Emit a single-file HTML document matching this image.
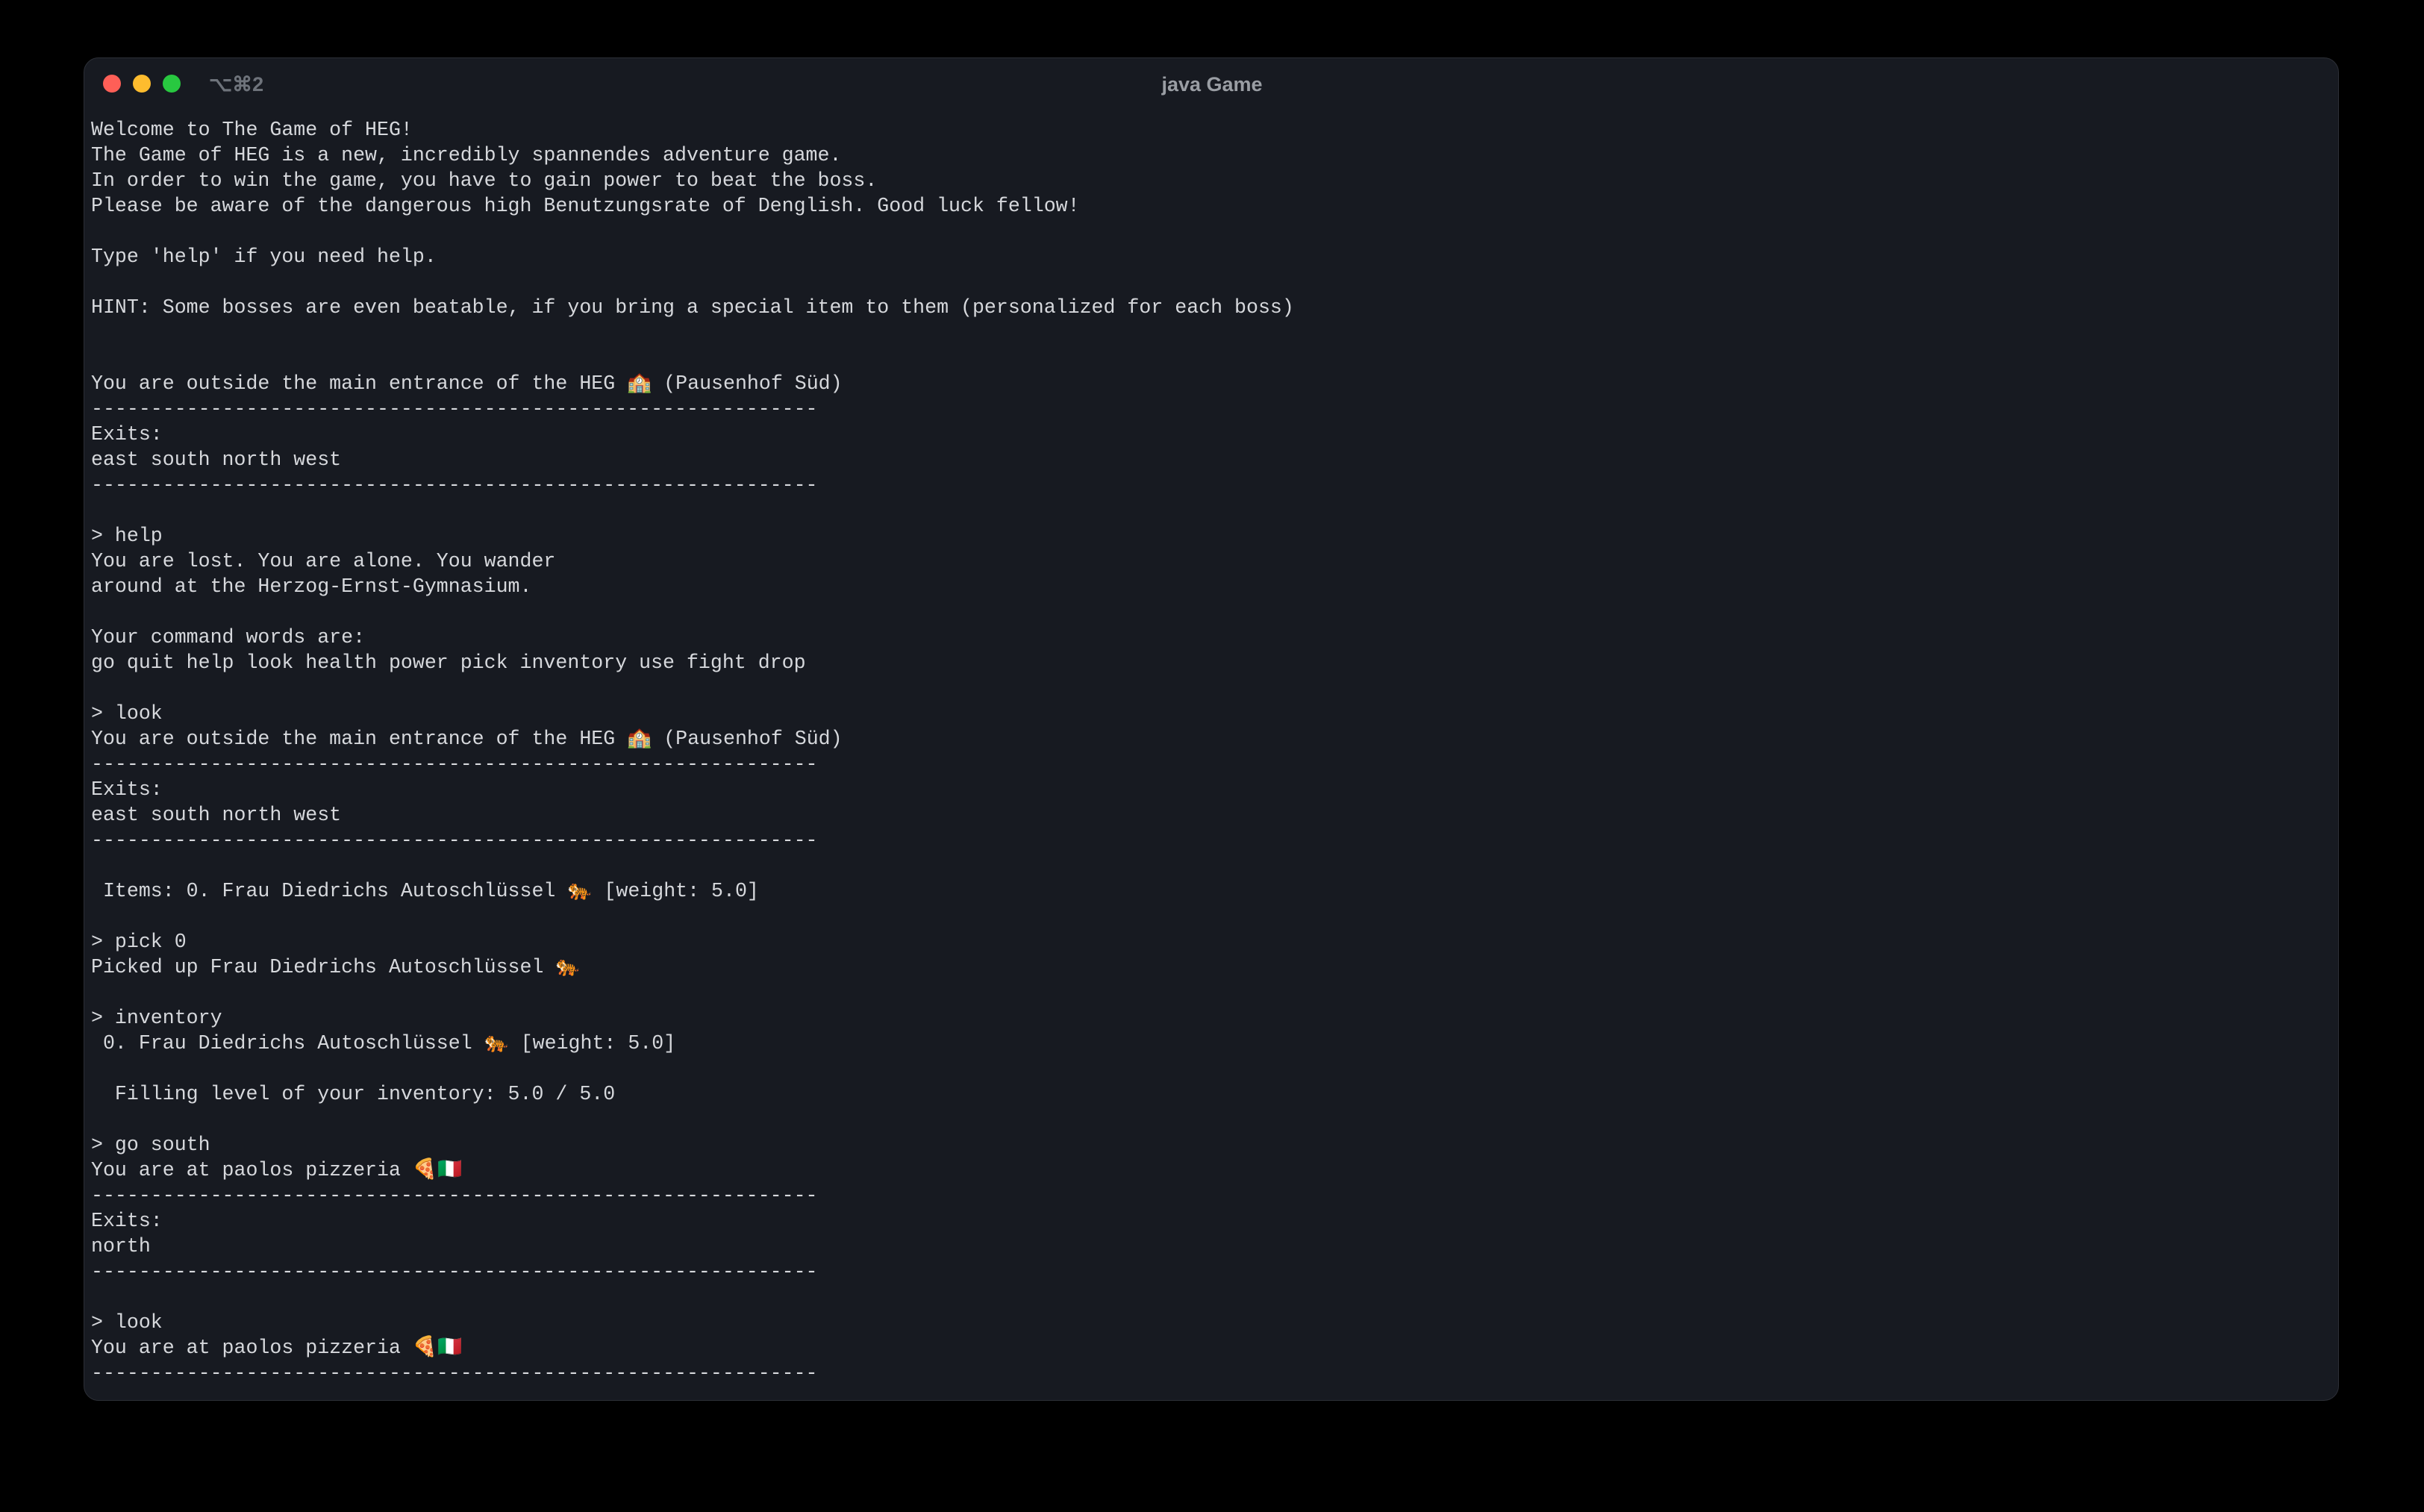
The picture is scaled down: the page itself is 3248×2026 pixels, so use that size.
<!DOCTYPE html>
<html><head><meta charset="utf-8"><style>
html,body{margin:0;padding:0;background:#000;width:3248px;height:2026px;overflow:hidden}
.win{position:absolute;left:112px;top:77px;width:3022px;height:1800px;background:#171a21;border-radius:20px;border:1px solid #2c2f36;box-sizing:border-box}
.dot{position:absolute;top:100px;width:24px;height:24px;border-radius:50%}
.t2{position:absolute;left:280px;top:98px;font:bold 27px "Liberation Sans",sans-serif;color:#6e737b}
.title{position:absolute;left:0;width:3248px;top:98px;text-align:center;font:bold 27px "Liberation Sans",sans-serif;color:#9a9ea4}
pre{position:absolute;left:122px;top:157px;margin:0;font:26.6px/34px "Liberation Mono","DejaVu Sans Mono",monospace;color:#d6d8dc;letter-spacing:0}
</style></head><body>
<div class="win"></div>
<div class="dot" style="left:138px;background:#fe5f57"></div>
<div class="dot" style="left:178px;background:#febc2e"></div>
<div class="dot" style="left:218px;background:#28c840"></div>
<div class="t2">⌥⌘2</div>
<div class="title">java Game</div>
<pre>Welcome to The Game of HEG!
The Game of HEG is a new, incredibly spannendes adventure game.
In order to win the game, you have to gain power to beat the boss.
Please be aware of the dangerous high Benutzungsrate of Denglish. Good luck fellow!

Type 'help' if you need help.

HINT: Some bosses are even beatable, if you bring a special item to them (personalized for each boss)


You are outside the main entrance of the HEG 🏫 (Pausenhof Süd)
-------------------------------------------------------------
Exits:
east south north west
-------------------------------------------------------------

&gt; help
You are lost. You are alone. You wander
around at the Herzog-Ernst-Gymnasium.

Your command words are:
go quit help look health power pick inventory use fight drop

&gt; look
You are outside the main entrance of the HEG 🏫 (Pausenhof Süd)
-------------------------------------------------------------
Exits:
east south north west
-------------------------------------------------------------

 Items: 0. Frau Diedrichs Autoschlüssel 🐅 [weight: 5.0]

&gt; pick 0
Picked up Frau Diedrichs Autoschlüssel 🐅

&gt; inventory
 0. Frau Diedrichs Autoschlüssel 🐅 [weight: 5.0]

  Filling level of your inventory: 5.0 / 5.0

&gt; go south
You are at paolos pizzeria 🍕🇮🇹
-------------------------------------------------------------
Exits:
north
-------------------------------------------------------------

&gt; look
You are at paolos pizzeria 🍕🇮🇹
-------------------------------------------------------------</pre>
</body></html>
